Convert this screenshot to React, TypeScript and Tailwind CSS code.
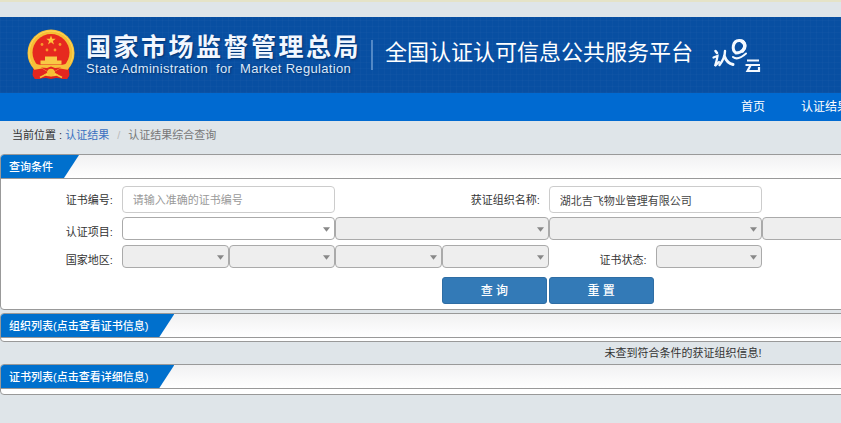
import type { ReactNode } from "react";

function Emblem() {
  return (
    <svg viewBox="0 0 48 52" className="h-[52px] w-12 shrink-0" role="img" aria-label="国徽">
      <path d="M7 34 L5.500 46 L8 50 L19 49 L24 50 L29 49 L40 50 L42.500 46 L41 34Z" fill="#dc221f" />
      <circle cx="24" cy="24" r="23.500" fill="#f6bf35" />
      <circle cx="24" cy="24" r="22" fill="none" stroke="#ffd75a" strokeWidth="1" />
      <circle cx="24" cy="23.500" r="18.500" fill="#e6291f" />
      <path d="M24 6.500l1.200 3.300h3.500l-2.800 2.100 1.100 3.500-3-2.100-3 2.100 1.100-3.500-2.800-2.100h3.500z" fill="#ffc23a" />
      <g fill="#f79a2b">
        <circle cx="15" cy="15.500" r="1.400" />
        <circle cx="33" cy="15.500" r="1.400" />
        <circle cx="20" cy="21" r="1.400" />
        <circle cx="28" cy="21" r="1.400" />
      </g>
      <path d="M18 27.500h12v4h4.500v4h-21v-4H18z" fill="#f8c945" />
      <path d="M4 34l10 2h20l10-2-5 10-8-2-7 1.500-7-1.500-8 2z" fill="#f7c03a" />
      <path d="M6 41l9-1.500 6 3.500-5 3.500-3 3.500H8l-2-3zM42 41l-9-1.500-6 3.500 5 3.500 3 3.500h5l2-3z" fill="#e3261f" />
      <path d="M14 38.500l6 .5 4-1.500 4 1.500 6-.5-6 3.500h-8z" fill="#e3261f" />
      <circle cx="24" cy="43.500" r="3.800" fill="#f6bf35" />
      <path d="M13 48.500l6-3M35 48.500l-6-3" stroke="#f6bf35" strokeWidth="1.800" fill="none" />
    </svg>
  );
}

function CloudLogo() {
  return (
    <svg viewBox="0 0 50 38" className="h-[38px] w-[50px] shrink-0" role="img" aria-label="认e云" fill="none" stroke="#f4f9ff" strokeLinecap="round">
      <path d="M4.500 15l1.500 2" strokeWidth="2.600" />
      <path d="M2.500 21.500l4-1.500c-.5 4-1.500 7-2.500 10l4-4" strokeWidth="2.200" />
      <path d="M14 15c0 6-2 9.500-5.500 14" strokeWidth="2.400" />
      <path d="M13.500 20.500c1.500 4 4 7 8.500 8" strokeWidth="3" />
      <path d="M25 17c-4.500-3-3.500-12 3-12.500 6-.5 7 6 4 9.500-2 2.200-4.500 3-7 3" strokeWidth="3" />
      <path d="M31 5.500c4 2 3.500 7 .5 9.500" strokeWidth="3.500" />
      <path d="M22 21c3 2.500 8 1 13-3.500" strokeWidth="2" />
      <g strokeLinecap="butt">
        <path d="M36 24.500h12M34.500 29H49" strokeWidth="2" />
        <path d="M39.500 29.500l-3 5.500H47.500M48 31v5" strokeWidth="2.200" />
      </g>
    </svg>
  );
}

function Panel({ title, children, className = "" }: { title: string; children?: ReactNode; className?: string }) {
  return (
    <section className={`overflow-hidden rounded-[4px] border border-[#999] bg-white ${className}`}>
      <div className="flex h-6 border-b border-[#999] bg-linear-to-b from-[#f1f1f2] to-white">
        <h2 className="flex items-center bg-[#0070cd] pr-[26px] pl-2 text-[11px] leading-4 font-medium text-white [clip-path:polygon(0_0,100%_0,calc(100%_-_15px)_100%,0_100%)]">
          {title}
        </h2>
      </div>
      {children}
    </section>
  );
}

function Label({ htmlFor, children, span = "" }: { htmlFor: string; children: ReactNode; span?: string }) {
  return (
    <label htmlFor={htmlFor} className={`pr-[9px] text-right leading-4 ${span}`}>
      {children}
    </label>
  );
}

function Select({ id, label, disabled = false, span = "" }: { id: string; label?: string; disabled?: boolean; span?: string }) {
  return (
    <div className={`relative ${span}`}>
      <select
        id={id}
        aria-label={label}
        disabled={disabled}
        className="block h-[23px] w-full appearance-none rounded-[4px] border border-[#aaa] bg-white px-2 disabled:bg-[#eee] disabled:opacity-100"
      >
        <option value=""></option>
      </select>
      <svg viewBox="0 0 8 5" className="pointer-events-none absolute top-[10px] right-[5px] h-[5px] w-[7px]" aria-hidden="true">
        <path d="M0 0h8L4 5z" fill="#888" />
      </svg>
    </div>
  );
}

const inputClass =
  "col-span-2 block h-[27px] w-full rounded-[4px] border border-[#ccc] bg-white px-[10px] text-[11px] text-[#444] placeholder:text-[#999] placeholder:opacity-100";
const buttonClass = "mr-[2px] h-[27px] rounded-[3px] border border-[#2e6da4] bg-[#337ab7] text-[12px] font-medium text-white";

export default function App() {
  return (
    <div className="min-h-screen overflow-x-hidden bg-[#dfe5e9] font-['Liberation_Sans','Noto_Sans_CJK_SC',sans-serif] text-[11px] text-[#333]">
      <div className="min-w-[1366px]">
        <div className="h-[17px] border-t-2 border-[#e5e3c8]" />
        <header>
          <div className="flex h-[76px] items-center bg-[#084fa2] bg-[repeating-linear-gradient(90deg,#ffffff05_0_1px,transparent_1px_6px),repeating-linear-gradient(0deg,#ffffff05_0_1px,transparent_1px_6px)] pl-[27px] text-white">
            <Emblem />
            <div className="ml-[11px] [text-shadow:1px_1px_2px_#00306d]">
              <p className="text-[25px] leading-7 font-bold tracking-widest text-[#f2f7ff]">国家市场监督管理总局</p>
              <p className="text-[13px] leading-4 tracking-wide whitespace-pre text-[#dbe8fa]">State Administration  for  Market Regulation</p>
            </div>
            <div className="ml-[10px] h-[30px] w-[2px] bg-[#5288c6]" />
            <h1 className="ml-3 pb-1 text-[22px] leading-8">全国认证认可信息公共服务平台</h1>
            <div className="ml-[18px]">
              <CloudLogo />
            </div>
          </div>
          <nav className="flex h-7 items-center gap-9 bg-[#006ad1] pl-[741px] text-[12px] text-white">
            <a href="#home">首页</a>
            <a href="#results">认证结果</a>
          </nav>
        </header>

        <nav aria-label="当前位置" className="flex h-[33px] items-start pt-[6px] pl-3 leading-4">
          <span className="whitespace-pre">当前位置 : </span>
          <a href="#results" className="text-[#3a70c0]">认证结果</a>
          <span className="px-2 text-[#bbb]">/</span>
          <span className="text-[#777]">认证结果综合查询</span>
        </nav>

        <main>
          <Panel title="查询条件">
            <form className="ml-[14px] w-[1281px] pt-[7px] pb-[5px]" onSubmit={(e) => e.preventDefault()}>
              <div className="grid grid-cols-12 items-center">
                <Label htmlFor="cert-no">证书编号:</Label>
                <input id="cert-no" className={inputClass} placeholder="请输入准确的证书编号" />
                <Label htmlFor="org-name" span="col-span-2">获证组织名称:</Label>
                <input id="org-name" className={inputClass} defaultValue="湖北吉飞物业管理有限公司" />
              </div>
              <div className="mt-1 grid grid-cols-12 items-end">
                <Label htmlFor="project">认证项目:</Label>
                <Select id="project" span="col-span-2" />
                <Select id="project-2" label="认证项目二级" disabled span="col-span-2" />
                <Select id="project-3" label="认证项目三级" disabled span="col-span-2" />
                <Select id="project-4" label="认证项目四级" disabled span="col-span-2" />
              </div>
              <div className="mt-[5px] grid grid-cols-12 items-end">
                <Label htmlFor="country">国家地区:</Label>
                <Select id="country" disabled />
                <Select id="province" label="省" disabled />
                <Select id="city" label="市" disabled />
                <Select id="district" label="区" disabled />
                <Label htmlFor="status">证书状态:</Label>
                <Select id="status" disabled />
              </div>
              <div className="mt-[9px] grid grid-cols-12">
                <button type="submit" className={`col-start-5 ${buttonClass}`}>查 询</button>
                <button type="reset" className={buttonClass}>重 置</button>
              </div>
            </form>
          </Panel>
          <Panel title="组织列表(点击查看证书信息)" className="mt-[3px] pb-[3px]" />
          <p className="py-[3px] text-center leading-4">未查到符合条件的获证组织信息!</p>
          <Panel title="证书列表(点击查看详细信息)" className="pb-[5px]" />
        </main>
      </div>
    </div>
  );
}
